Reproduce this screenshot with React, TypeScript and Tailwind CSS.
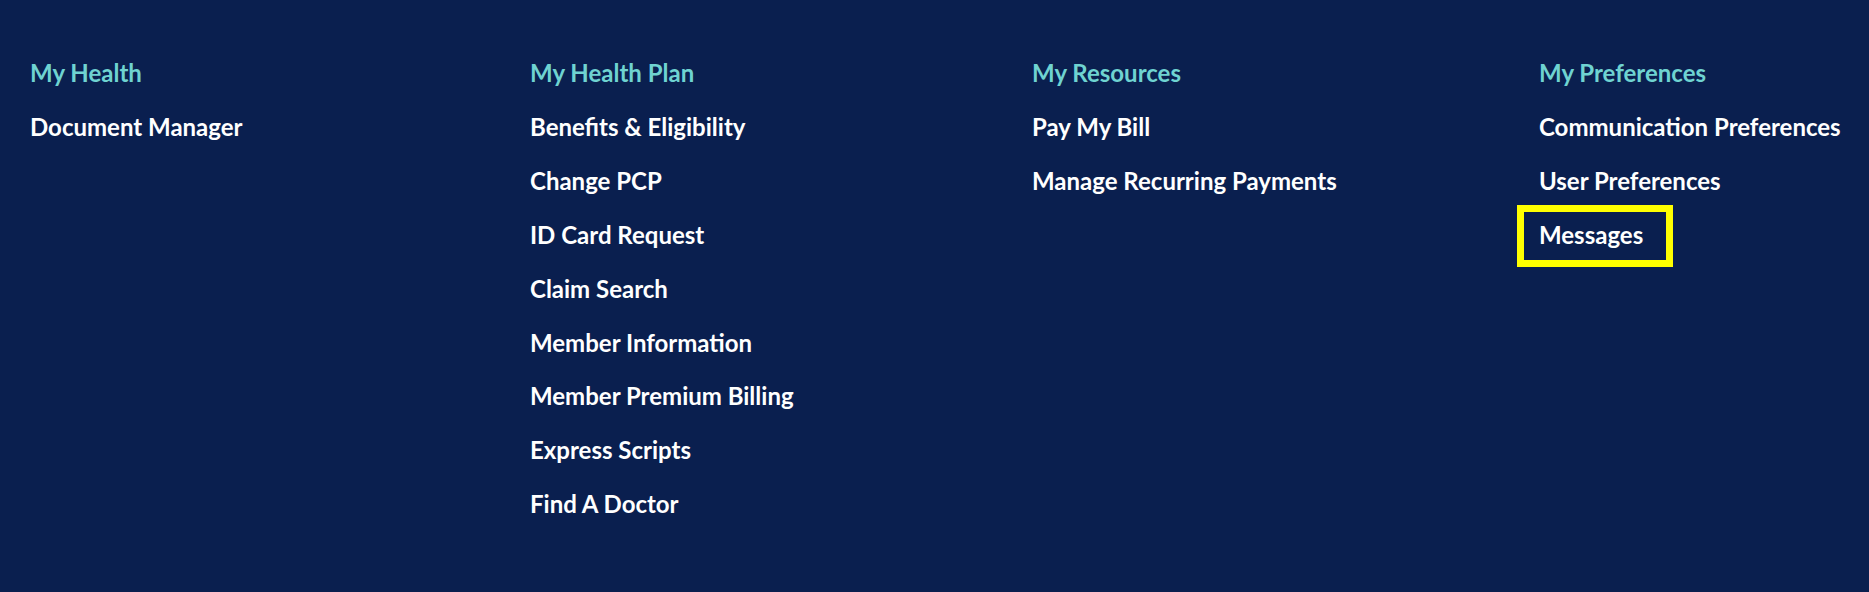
const columns = [
  {
    title: "My Health",
    links: ["Document Manager"],
  },
  {
    title: "My Health Plan",
    links: [
      "Benefits & Eligibility",
      "Change PCP",
      "ID Card Request",
      "Claim Search",
      "Member Information",
      "Member Premium Billing",
      "Express Scripts",
      "Find A Doctor",
    ],
  },
  {
    title: "My Resources",
    links: ["Pay My Bill", "Manage Recurring Payments"],
  },
  {
    title: "My Preferences",
    links: ["Communication Preferences", "User Preferences", "Messages"],
  },
]

// the focused link gets the yellow ring
const focused = "Messages"

export default function App() {
  return (
    <div className="min-h-[592px] w-full bg-[#0a1f4f] font-['Lato','Noto_Sans',sans-serif]">
      <nav className="grid grid-cols-[500px_502px_507px_1fr] pl-[30px] pt-[46.4px]">
        {columns.map((col) => (
          <div key={col.title} className="flex flex-col">
            <h3 className="text-[24px] font-bold leading-[53.85px] text-[#6fd3d1]">{col.title}</h3>
            <ul className="flex flex-col">
              {col.links.map((link) => (
                <li key={link} className="h-[53.85px] text-[24px] leading-[53.85px]">
                  <a href="#" className="relative inline-block align-top font-bold text-white">
                    {link}
                    {link === focused && (
                      <span className="pointer-events-none absolute -top-[3px] -bottom-[5.4px] -left-[22px] -right-[30px] border-[7px] border-[#ffff00]" />
                    )}
                  </a>
                </li>
              ))}
            </ul>
          </div>
        ))}
      </nav>
    </div>
  )
}
